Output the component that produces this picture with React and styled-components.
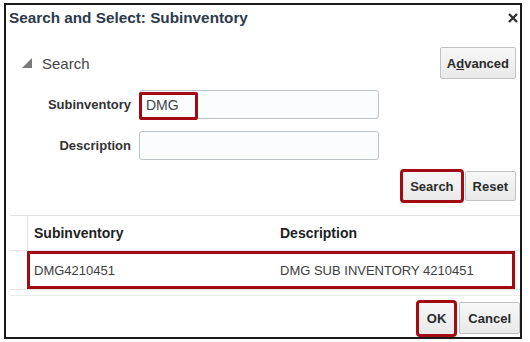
import React from 'react';
import styled, { createGlobalStyle } from 'styled-components';

const GlobalStyle = createGlobalStyle`
  body {
    margin: 0;
    background: #fff;
    font-family: "Liberation Sans", Arial, sans-serif;
  }
`;

const Dialog = styled.div`
  box-sizing: border-box;
  margin: 3px 0 0 4px;
  width: 518px;
  height: 336px;
  border: 2px solid #1a1a1a;
  display: flex;
  flex-direction: column;
`;

const TitleBar = styled.div`
  height: 25px;
  display: flex;
  align-items: center;
  justify-content: space-between;
  padding: 0 1px 0 3px;
`;

const Title = styled.h1`
  margin: 0;
  font-size: 15.3px;
  font-weight: 700;
  color: #2c3a4b;
`;

const Close = styled.svg`
  width: 10px;
  height: 10px;
  margin-right: 1px;
`;

const SearchHead = styled.div`
  display: flex;
  align-items: center;
  justify-content: space-between;
  margin-top: 17px;
  padding: 0 4px 0 16px;
`;

const Disclosure = styled.div`
  display: flex;
  align-items: center;
  gap: 10px;
  font-size: 15px;
  color: #444;
`;

const Button = styled.button`
  box-sizing: border-box;
  height: ${p => p.$h || 30}px;
  padding: 0 ${p => p.$pad || 6}px;
  font-family: inherit;
  font-size: 13px;
  font-weight: 700;
  color: #2b2b2b;
  background: linear-gradient(#f7f7f7, #e9e9e9);
  border: 1px solid #c2c2c2;
  border-radius: 2px;
  outline: ${p => (p.$marked ? '3px solid #a30a12' : 'none')};
  outline-offset: -1px;
  u {
    text-decoration: underline;
  }
`;

const Form = styled.div`
  display: grid;
  grid-template-columns: 125px 240px;
  column-gap: 8px;
  row-gap: 12px;
  align-items: center;
  margin-top: 11px;
`;

const Label = styled.label`
  text-align: right;
  font-size: 13px;
  font-weight: 700;
  color: #333;
`;

const Field = styled.div`
  position: relative;
  box-sizing: border-box;
  height: 29px;
  border: 1px solid #bcc3ca;
  border-radius: 3px;
  background: #fbfcfd;
  display: flex;
  align-items: center;
  padding-left: 6px;
  font-size: 14px;
  color: #444;
`;

const Marker = styled.span`
  position: absolute;
  left: -1px;
  top: 1px;
  width: 59px;
  height: 28px;
  box-sizing: border-box;
  border: 3px solid #a30a12;
  border-radius: 2px;
`;

const ButtonRow = styled.div`
  display: flex;
  justify-content: flex-end;
  gap: ${p => p.$gap || 3}px;
  padding-right: ${p => p.$right ?? 4}px;
  margin-top: ${p => p.$top || 0}px;
`;

const Table = styled.div`
  margin: 14px 0 0 4px;
  border-top: 1px solid #e2e2e2;
  font-size: 13px;
`;

const Row = styled.div`
  display: flex;
  height: ${p => p.$h}px;
  border-bottom: 1px solid #e4e4e4;
`;

const Gutter = styled.div`
  width: 17px;
  border-right: ${p => (p.$line ? '1px solid #e4e4e4' : 'none')};
`;

const Cells = styled.div`
  box-sizing: border-box;
  width: 488px;
  display: grid;
  grid-template-columns: 246px 1fr;
  align-items: center;
  border: ${p => (p.$marked ? '3px solid #a30a12' : '3px solid transparent')};
  margin-left: ${p => (p.$marked ? '0' : '-1px')};
`;

const Cell = styled.div`
  padding-left: 4px;
  font-weight: ${p => (p.$head ? 700 : 400)};
  font-size: ${p => (p.$head ? 14 : 13)}px;
  color: ${p => (p.$head ? '#1f1f1f' : '#3d3d3d')};
`;

const Spacer = styled.div`
  height: 5px;
  border-bottom: 1px solid #ececec;
  margin-left: 4px;
`;

export default function App() {
  return (
    <>
      <GlobalStyle />
      <Dialog>
        <TitleBar>
          <Title>Search and Select: Subinventory</Title>
          <Close viewBox="0 0 10 10">
            <path d="M1 1L9 9M9 1L1 9" stroke="#333" strokeWidth="2.4" />
          </Close>
        </TitleBar>

        <SearchHead>
          <Disclosure>
            <svg width="10" height="10" viewBox="0 0 10 10">
              <polygon points="10,0 10,10 0,10" fill="#7a7a7a" />
            </svg>
            Search
          </Disclosure>
          <Button $h={32} $pad={6}>
            A<u>d</u>vanced
          </Button>
        </SearchHead>

        <Form>
          <Label>Subinventory</Label>
          <Field>
            DMG
            <Marker />
          </Field>
          <Label>Description</Label>
          <Field />
        </Form>

        <ButtonRow $top={11}>
          <Button $marked $pad={7}>Search</Button>
          <Button $pad={7}>Reset</Button>
        </ButtonRow>

        <Table>
          <Row $h={34}>
            <Gutter $line />
            <Cells>
              <Cell $head>Subinventory</Cell>
              <Cell $head>Description</Cell>
            </Cells>
          </Row>
          <Row $h={38}>
            <Gutter />
            <Cells $marked>
              <Cell>DMG4210451</Cell>
              <Cell>DMG SUB INVENTORY 4210451</Cell>
            </Cells>
          </Row>
        </Table>
        <Spacer />

        <ButtonRow $top={6} $gap={4} $right={0}>
          <Button $marked $h={33} $pad={8}>OK</Button>
          <Button $h={32} $pad={8}>Cancel</Button>
        </ButtonRow>
      </Dialog>
    </>
  );
}
